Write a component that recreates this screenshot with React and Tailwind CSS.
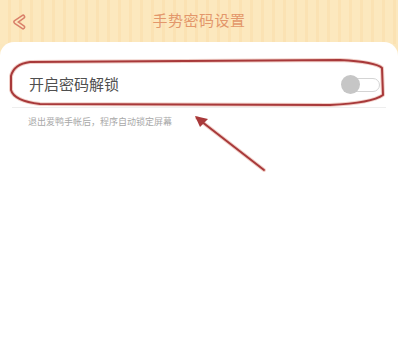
import React from 'react';

const Toggle = () => (
  <div className="relative w-[40px] h-[20px] flex items-center">
    <div className="absolute left-[10px] w-[29px] h-[14px] rounded-full border border-[#d4d4d4] bg-white" />
    <div className="absolute left-0 w-[19px] h-[19px] rounded-full bg-[#c6c6c6]" />
  </div>
);

const App = () => {
  return (
    <div
      className="w-[398px] h-[343px] overflow-hidden relative bg-[#fbe7bd]"
      style={{ fontFamily: '"Noto Sans CJK SC", "Noto Sans", sans-serif' }}
    >
      {/* striped header */}
      <div className="h-[44px] flex items-center px-[11px] bg-[repeating-linear-gradient(90deg,#fce8be_0px,#fce8be_8px,#fbe2b3_8px,#fbe2b3_11px)]">
        <svg width="16" height="16" viewBox="0 0 16 16" className="shrink-0 mt-[-1px]">
          <path d="M12 2.8 L4.5 8 L12 13.2" fill="none" stroke="#d9806a" strokeWidth="4.6" strokeLinecap="round" strokeLinejoin="round" />
          <path d="M12 2.8 L4.5 8 L12 13.2" fill="none" stroke="#fce8be" strokeWidth="1.6" strokeLinecap="round" strokeLinejoin="round" />
        </svg>
        <h1 className="flex-1 text-center text-[15px] tracking-[0.5px] text-[#e3976b] mr-[16px] mt-[-3px]">手势密码设置</h1>
      </div>

      {/* white card */}
      <div className="absolute top-[42px] left-0 right-0 bottom-0 bg-white rounded-t-[14px]">
        <div className="pt-[20px] px-[12px]">
          <div className="h-[46px] flex items-center justify-between pl-[17px] pr-[5px] border-b border-[#eeeeee]">
            <span className="text-[15px] text-[#4f4f4f]">开启密码解锁</span>
            <Toggle />
          </div>
          <p className="pl-[16px] pt-[7px] text-[9px] text-[#a8a8a8]">退出爱鸭手帐后，程序自动锁定屏幕</p>
        </div>
      </div>

      {/* red annotation */}
      <svg className="absolute inset-0 pointer-events-none" width="398" height="343" viewBox="0 0 398 343">
        <g fill="none" stroke="#e9b0a4" strokeWidth="4" strokeLinecap="round" strokeLinejoin="round" opacity="0.6">
          <path d="M30 62 L340 60 Q376 62 382 68 L383 95 Q372 103 330 105 L40 104 Q14 101 11 90 L11 76 Q14 64 30 62 Z" />
          <path d="M264 170 L197 118" />
        </g>
        <g fill="none" stroke="#a8393a" strokeWidth="2" strokeLinecap="round" strokeLinejoin="round">
          <path d="M30 62 L340 60 Q376 62 382 68 L383 95 Q372 103 330 105 L40 104 Q14 101 11 90 L11 76 Q14 64 30 62 Z" />
          <path d="M264 170 L197 118" />
        </g>
        <path d="M195 116 L208 119 L200 127 Z" fill="#a8393a" />
      </svg>
    </div>
  );
};

export default App;
